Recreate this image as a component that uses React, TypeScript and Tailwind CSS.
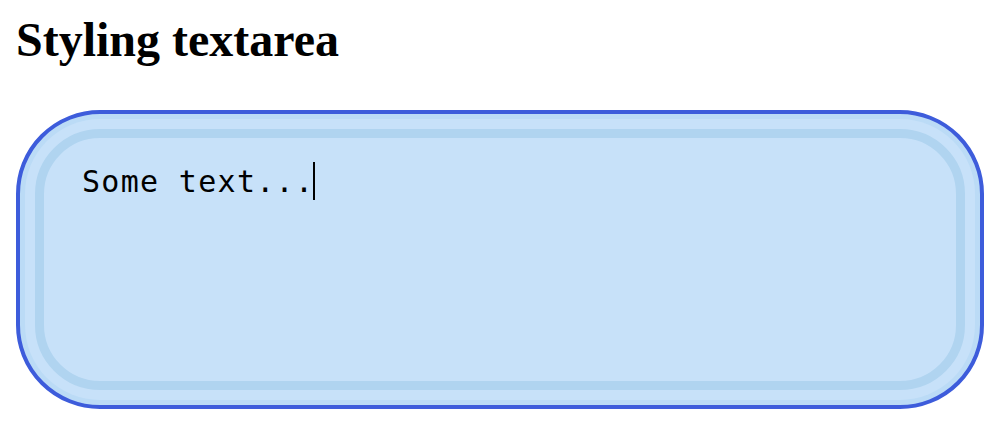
import React from "react";

export default function App() {
  return (
    <div className="w-[992px] h-[421px] bg-white pl-[16px] pr-[8px] overflow-hidden">
      <h2 className="pt-[16px] m-0 text-[48px] leading-[48px] font-bold text-black [font-family:'Liberation_Serif','Times_New_Roman',serif]">
        Styling textarea
      </h2>
      <div className="mt-[46px] w-[968px] h-[299px] rounded-[84px] border-4 border-[#3d5cdb] bg-[#bbdbf6] p-[5px]">
        <div className="w-full h-full rounded-[75px] bg-[#c7e1f9] p-[10px]">
          <div className="w-full h-full rounded-[65px] border-[9px] border-[#b0d4f0] bg-[#c7e1f9] pl-[38px] pt-[25px]">
            <div className="flex items-start">
              <span className="text-[30px] leading-[37px] tracking-[1.3px] text-black whitespace-pre [font-family:'DejaVu_Sans_Mono',monospace]">
                Some text...
              </span>
              <span className="mt-[-1px] ml-[-1px] w-[2px] h-[38px] bg-black" />
            </div>
          </div>
        </div>
      </div>
    </div>
  );
}
